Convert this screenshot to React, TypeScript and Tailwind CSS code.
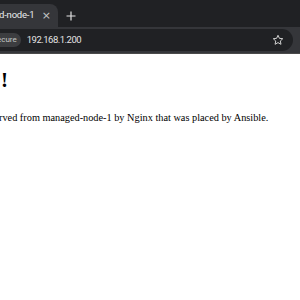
export default function App() {
  return (
    <div className="w-[300px] h-[300px] overflow-hidden bg-white flex flex-col">
      {/* Tab strip */}
      <div className="h-[27px] bg-[#202124] flex items-end shrink-0">
        <div className="h-[23px] w-[58px] bg-[#35363a] rounded-tr-[8px] flex items-center pr-[7px] shrink-0">
          <span className="text-[9.5px] tracking-[-0.2px] text-[#e8eaed] ml-[-1px] whitespace-nowrap" style={{ fontFamily: 'Roboto, sans-serif' }}>
            d-node-1
          </span>
          <span className="ml-auto text-[11px] text-[#c4c7c5] leading-none" style={{ fontFamily: '"DejaVu Sans", sans-serif' }}>
            ×
          </span>
        </div>
        <div className="h-[23px] flex items-center ml-[8px]">
          <svg width="10" height="10" viewBox="0 0 10 10">
            <path d="M5 0.5v9M0.5 5h9" stroke="#e3e3e3" strokeWidth="1.2" />
          </svg>
        </div>
      </div>
      {/* Toolbar */}
      <div className="h-[27px] bg-[#35363a] flex items-center shrink-0 border-b border-[#4a4a4a]">
        <div className="h-[22px] flex-1 mr-[7px] bg-[#202124] rounded-r-full flex items-center">
          <div className="h-[14px] pl-[3px] pr-[4px] ml-[-6px] bg-[#3c3d40] rounded-full flex items-center">
            <span className="text-[8px] text-[#c4c7c5]" style={{ fontFamily: 'Roboto, sans-serif' }}>ecure</span>
          </div>
          <span className="ml-[6px] text-[9.5px] tracking-[-0.5px] text-[#e3e3e3]" style={{ fontFamily: 'Roboto, sans-serif' }}>192.168.1.200</span>
          <svg className="ml-auto mr-[9px]" width="12" height="12" viewBox="0 0 24 24" fill="none" stroke="#d0d0d0" strokeWidth="2" strokeLinejoin="round">
            <path d="M12 2.5l2.9 6.2 6.7.7-5 4.6 1.4 6.6L12 17.2l-5.9 3.4 1.4-6.6-5-4.6 6.7-.7z" />
          </svg>
        </div>
      </div>
      {/* Page */}
      <div className="flex-1 bg-white text-black" style={{ fontFamily: '"Liberation Serif", serif' }}>
        <h1 className="text-[21px] font-bold mt-[16px] ml-[1px] leading-none">!</h1>
        <p className="text-[10.3px] mt-[19px] ml-[-1px] whitespace-nowrap">
          rved from managed-node-1 by Nginx that was placed by Ansible.
        </p>
      </div>
    </div>
  );
}
